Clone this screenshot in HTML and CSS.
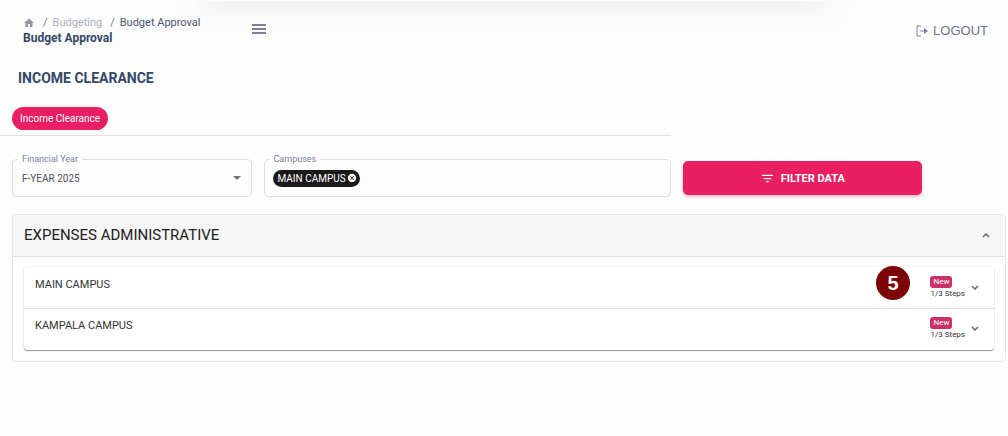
FILE: index.html
```html
<!DOCTYPE html>
<html lang="en">
<head>
<meta charset="UTF-8">
<meta name="viewport" content="width=device-width">
<title>Budget Approval</title>
<link rel="stylesheet" href="styles.css">
</head>
<body>
<div class="top-glow"></div>
<header class="navbar">
	<div class="crumbs">
		<nav aria-label="Breadcrumb">
			<ol class="crumb-list">
				<li><a href="#" aria-label="Home"><svg class="icon-home" viewBox="0 0 24 24"><path d="M10 20v-6h4v6h5v-8h3L12 3 2 12h3v8z"/></svg></a></li>
				<li><a href="#" class="crumb-link">Budgeting</a></li>
				<li class="crumb-current">Budget Approval</li>
			</ol>
		</nav>
		<h6 class="page-name">Budget Approval</h6>
	</div>
	<button type="button" class="menu-btn" aria-label="Menu">
		<svg class="icon-menu" viewBox="0 0 14 10"><path d="M0 1h14M0 5h14M0 9h14"/></svg>
	</button>
	<button type="button" class="logout">
		<svg class="icon-logout" viewBox="0 0 12 12"><path d="M5 1H1v10h4M4 6h6"/><path class="tip" d="M8 3l4 3-4 3z"/></svg>
		LOGOUT
	</button>
</header>
<main>
	<h1 class="title">INCOME CLEARANCE</h1>
	<div class="tabs">
		<button type="button" class="tab">Income Clearance</button>
	</div>

	<form class="filters">
		<div class="cell">
			<fieldset class="field">
				<legend><label for="year">Financial Year</label></legend>
				<div class="field-body">
					<select id="year" class="year">
						<option>F-YEAR 2025</option>
					</select>
					<svg class="caret" viewBox="0 0 8 4"><path d="M0 0h8L4 4z"/></svg>
				</div>
			</fieldset>
		</div>
		<div class="cell">
			<fieldset class="field">
				<legend><label for="campuses">Campuses</label></legend>
				<div class="field-body">
					<span class="chip">MAIN CAMPUS
						<button type="button" class="chip-remove" aria-label="Remove">
							<svg viewBox="0 0 24 24"><path d="M12 2C6.47 2 2 6.47 2 12s4.47 10 10 10 10-4.47 10-10S17.53 2 12 2zm5 13.59L15.59 17 12 13.41 8.41 17 7 15.59 10.59 12 7 8.41 8.41 7 12 10.59 15.59 7 17 8.41 13.41 12 17 15.59z"/></svg>
						</button>
					</span>
					<input type="text" id="campuses" class="campus-input">
				</div>
			</fieldset>
		</div>
		<div class="cell">
			<button type="button" class="filter-btn">
				<svg class="icon-filter" viewBox="0 0 24 24"><path d="M10 18h4v-2h-4v2zM3 6v2h18V6H3zm3 7h12v-2H6v2z"/></svg>
				FILTER DATA
			</button>
		</div>
	</form>

	<section class="panel">
		<button type="button" class="panel-head" aria-expanded="true">
			<span>EXPENSES ADMINISTRATIVE</span>
			<svg class="chevron" viewBox="0 0 8 5"><path d="M1 4l3-3 3 3"/></svg>
		</button>
		<div class="panel-body">
			<div class="campus-list">
				<button type="button" class="campus" aria-expanded="false">
					<span class="campus-name">MAIN CAMPUS</span>
					<span class="marker">5</span>
					<span class="status"><span class="badge">New</span><span class="steps">1/3 Steps</span></span>
					<svg class="chevron" viewBox="0 0 8 5"><path d="M1 1l3 3 3-3"/></svg>
				</button>
				<button type="button" class="campus" aria-expanded="false">
					<span class="campus-name">KAMPALA CAMPUS</span>
					<span class="status"><span class="badge">New</span><span class="steps">1/3 Steps</span></span>
					<svg class="chevron" viewBox="0 0 8 5"><path d="M1 1l3 3 3-3"/></svg>
				</button>
			</div>
		</div>
	</section>
</main>
</body>
</html>
```

FILE: styles.css
```css
* {
	box-sizing: border-box;
}
body {
	margin: 0;
	background-color: #fdfdfd;
	font-family: Roboto, 'Liberation Sans', sans-serif;
	font-size: 11px;
	color: #344767;
}
button, input, select {
	margin: 0;
	padding: 0;
	border: 0;
	background: none;
	font-family: inherit;
	font-size: inherit;
	color: inherit;
}
button {
	cursor: pointer;
}
svg {
	display: block;
	fill: currentColor;
}

/* soft shadow of the bar above the page */
.top-glow {
	position: absolute;
	top: 0;
	left: 20%;
	right: 18%;
	height: 1px;
	box-shadow: 0 0 26px 3px rgba(52, 71, 103, 0.22);
}

.navbar {
	display: flex;
	align-items: flex-start;
	padding: 15px 20px 0 23px;
}
.crumbs {
	width: 229px;
}
.crumb-list {
	display: flex;
	margin: 0;
	padding: 0;
	list-style: none;
	line-height: 15px;
}
.crumb-list li {
	display: flex;
	align-items: center;
}
.crumb-list li + li::before {
	content: "/";
	margin: 0 5px 0 8px;
	color: #6c757d;
}
.crumb-list a {
	color: #a9b0bc;
	text-decoration: none;
}
.crumb-list .crumb-current {
	color: #495672;
}
.icon-home {
	width: 12px;
	height: 12px;
	color: #8d97a8;
}
.page-name {
	margin: 0;
	font-size: 12px;
	line-height: 17px;
	font-weight: 700;
}
.menu-btn {
	padding: 9px 0;
}
.icon-menu {
	width: 14px;
	height: 10px;
	fill: none;
	stroke: #7b809a;
	stroke-width: 2;
}
.logout {
	display: flex;
	align-items: center;
	gap: 5px;
	margin-left: auto;
	padding-top: 8px;
	font-family: 'Liberation Sans', Arial, sans-serif;
	font-size: 13px;
	line-height: 16px;
	color: #6f7282;
}
.icon-logout {
	width: 12px;
	height: 12px;
	fill: none;
	stroke: #7b809a;
}
.icon-logout .tip {
	fill: #7b809a;
	stroke: none;
}

main {
	padding-right: 2px;
}
.title {
	margin: 21px 0 0 18px;
	font-size: 14px;
	line-height: 20px;
	font-weight: 700;
}
.tabs {
	width: 66.666%;
	margin-top: 19px;
	padding: 0 0 5px 12px;
	border-bottom: 1px solid #dedfe2;
}
.tab {
	display: block;
	height: 23px;
	padding: 0 8px;
	border-radius: 12px;
	background-color: #e91e63;
	font-size: 10px;
	color: #fff;
}

.filters {
	display: grid;
	grid-template-columns: 3fr 5fr 3fr 1fr;
	align-items: end;
	margin-top: 17px;
}
.cell {
	min-width: 0;
	padding-left: 12px;
}
.field {
	min-width: 0;
	margin: 0;
	padding: 0 8px;
	border: 1px solid #d9dbe1;
	border-radius: 5px;
}
.field legend {
	margin-left: -3px;
	padding: 0 4px;
	font-size: 9px;
	line-height: 12px;
	color: #7b809a;
}
.field-body {
	display: flex;
	align-items: center;
	height: 31px;
	padding-bottom: 5px;
}
.year {
	flex: 1;
	appearance: none;
	padding-left: 1px;
	font-size: 10px;
	color: #495057;
}
.caret {
	width: 8px;
	height: 4px;
	margin-right: 2px;
	color: #757575;
	pointer-events: none;
}
.chip {
	display: flex;
	align-items: center;
	gap: 1px;
	height: 17px;
	padding: 0 3px 0 5px;
	border-radius: 9px;
	background-color: #191919;
	font-size: 10px;
	color: #fff;
}
.chip-remove svg {
	width: 10px;
	height: 10px;
}
.campus-input {
	flex: 1;
	min-width: 0;
	outline: 0;
}
.filter-btn {
	display: flex;
	align-items: center;
	justify-content: center;
	gap: 6px;
	width: 100%;
	height: 34px;
	margin-bottom: 2px;
	border-radius: 5px;
	background-color: #e91e63;
	box-shadow: 0 2px 3px rgba(233, 30, 99, 0.3);
	font-weight: 700;
	color: #fff;
}
.icon-filter {
	width: 15px;
	height: 15px;
}

.panel {
	margin: 17px 0 0 12px;
	border: 1px solid #e6e6e6;
	border-radius: 4px;
	background-color: #fff;
}
.panel-head {
	display: flex;
	align-items: center;
	justify-content: space-between;
	width: 100%;
	height: 42px;
	padding: 0 15px 1px 11px;
	border-bottom: 1px solid #e0e0e0;
	border-radius: 4px 4px 0 0;
	background-color: #f6f6f6;
	font-size: 15px;
	color: #212121;
}
.chevron {
	width: 8px;
	height: 5px;
	fill: none;
	stroke: #666;
	stroke-width: 1.5;
}
.panel-body {
	padding: 10px 11px 11px;
}
.campus-list {
	border-radius: 3px;
	box-shadow: 0 1px 1px rgba(0, 0, 0, 0.4), 0 0 2px rgba(0, 0, 0, 0.12);
}
.campus {
	position: relative;
	display: flex;
	width: 100%;
	height: 41px;
	padding: 9px 15px 0 11px;
	text-align: left;
	color: #333;
}
.campus + .campus {
	height: 42px;
	padding-top: 8px;
	border-top: 1px solid #dcdcdc;
}
.campus-name {
	flex: 1;
	line-height: 17px;
}
.marker {
	position: absolute;
	top: -1px;
	right: 84px;
	width: 34px;
	height: 34px;
	border-radius: 50%;
	background-color: #7d0205;
	font-family: 'Liberation Sans', Arial, sans-serif;
	font-size: 20px;
	line-height: 34px;
	font-weight: 700;
	text-align: center;
	color: #fff;
}
.status {
	display: flex;
	flex-direction: column;
	align-items: flex-start;
	margin-right: 6px;
}
.badge {
	padding: 0 3px;
	border-radius: 3px;
	background-color: #cb3066;
	font-size: 8px;
	line-height: 12px;
	color: #fff;
}
.steps {
	font-size: 8px;
	line-height: 12px;
}
.campus .chevron {
	margin-top: 9px;
}
```
